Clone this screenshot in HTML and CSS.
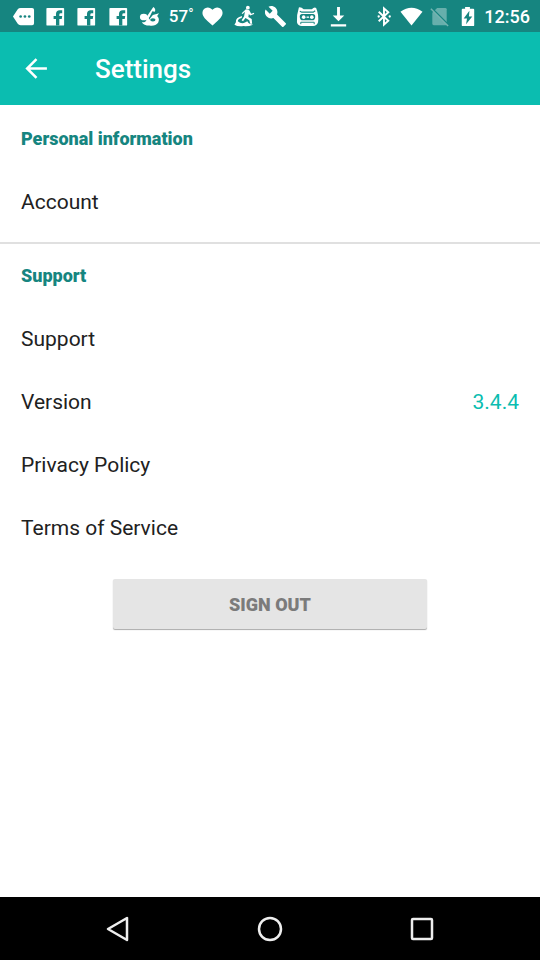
FILE: index.html
```html
<!DOCTYPE html>
<html lang="en">
<head>
<meta charset="utf-8">
<meta name="viewport" content="width=device-width, initial-scale=1">
<title>Settings</title>
<link rel="stylesheet" href="styles.css">
</head>
<body>
<div class="status-bar">
  <div class="notifications">
    <svg class="icon" viewBox="0 0 24 24"><path d="M1 12 6 4.500Q7 3 9 3h12q2 0 2 2v14q0 2-2 2H9q-2 0-3-1.500Z"/><g fill="#168580"><circle cx="9" cy="12" r="1.400"/><circle cx="13.500" cy="12" r="1.400"/><circle cx="18" cy="12" r="1.400"/></g></svg>
    <svg class="icon" viewBox="0 0 24 24"><rect x="2.500" y="3" width="18.500" height="18.500" rx="1"/><path d="M12.500 21.500V14.500H10v-3h2.500V9.500Q12.500 5.500 16.500 5.500H19v3h-1.500q-1.500 0-1.500 1.500v1.500h3l-.5 3H16v7Z" fill="#168580"/></svg>
    <svg class="icon" viewBox="0 0 24 24"><rect x="2.500" y="3" width="18.500" height="18.500" rx="1"/><path d="M12.500 21.500V14.500H10v-3h2.500V9.500Q12.500 5.500 16.500 5.500H19v3h-1.500q-1.500 0-1.500 1.500v1.500h3l-.5 3H16v7Z" fill="#168580"/></svg>
    <svg class="icon" viewBox="0 0 24 24"><rect x="2.500" y="3" width="18.500" height="18.500" rx="1"/><path d="M12.500 21.500V14.500H10v-3h2.500V9.500Q12.500 5.500 16.500 5.500H19v3h-1.500q-1.500 0-1.500 1.500v1.500h3l-.5 3H16v7Z" fill="#168580"/></svg>
    <svg class="icon" viewBox="0 0 24 24"><ellipse cx="6" cy="12.500" rx="4" ry="3.500"/><path d="m7 15 9-13q3 2 1.500 5L15 6.500l-3 6-3 3Z"/><path d="M10 12q2 1 1.500 3.500l4-5 6.500-2-2 3q3 3 1 7-3 4-9 3-6 0-8-3.500 4 .5 5-3Z"/><ellipse cx="15.500" cy="15.500" rx="2.800" ry="1.700" fill="#168580"/></svg>
    <span class="temperature">57<span class="degree">°</span></span>
    <svg class="icon" viewBox="0 0 24 24"><path d="M12 21.500 10.500 20C5 15.200 1.500 12 1.500 8A5.500 5.500 0 0 1 7 2.500c2 0 3.800 1 5 2.500 1.200-1.500 3-2.500 5-2.500A5.500 5.500 0 0 1 22.500 8c0 4-3.500 7.200-9 12Z"/></svg>
    <svg class="icon" viewBox="0 0 24 24"><circle cx="15.500" cy="2.800" r="2"/><path d="m13.500 4.500 3.500 1 2 3.500 3-1v1.500L18 11l-1.500-1.500-.5 3 3.500 2 .5 5h-2l-1-3.500-4-2.500-2.500 3.500-1.500-1 2.500-4 1-5-2.500 2.500-1-1Z"/><path d="M3 18q-.5-5 6.500-6.500l-.5 2q-4 1-4 3.500 4 3.500 8 1l2-1q1 3 6 3.500-5 2-10 1.500-6 1-9.500-1.500Z"/></svg>
    <svg class="icon" viewBox="0 0 24 24"><path d="M22.700 19 13.600 9.900c.9-2.300.4-5-1.500-6.900-2-2-5-2.400-7.400-1.300L9 6 6 9 1.600 4.700C.4 7.100.9 10.100 2.900 12.100c1.900 1.900 4.600 2.400 6.900 1.500l9.100 9.100c.4.400 1 .4 1.400 0l2.300-2.300c.5-.4.500-1.100.1-1.400Z"/></svg>
    <svg class="icon" viewBox="0 0 24 24"><path d="M3 2.500Q5.500 2 8 4.500h8.500Q19 1.500 21 3q3 7 2 15-1.500 4-5 4H6q-4 0-5-4Q.5 10 3 2.500Z"/><path d="M4 6.500 6 7.500h12l2-1.500" fill="none" stroke="#168580" stroke-width="1.200"/><path d="M6 9.500h12q2.500.5 2 3.500t-3 3H7q-2.500 0-3-3t2-3.500Z" fill="#168580"/><circle cx="8" cy="12.700" r="1.900"/><circle cx="16.500" cy="12.700" r="1.900"/><path d="M11 12h2.500v1.400H11Z"/><path d="M5 20v-2h14v2" fill="none" stroke="#168580"/></svg>
    <svg class="icon" viewBox="0 0 24 24"><path d="M10.500 2h3v9H18l-6 6-6-6h4.500ZM4 20h16v2.500H4Z"/></svg>
  </div>
  <div class="system">
    <svg class="icon" viewBox="0 0 24 24"><path d="m7 7 10 9.500-4.500 4v-17l4.500 4L7 17" fill="none" stroke="#fff" stroke-width="2"/><circle cx="7" cy="12" r="1.200"/><circle cx="18.500" cy="12" r="1.200"/></svg>
    <svg class="icon" viewBox="0 0 24 24"><path d="M12 21.500.5 7Q12-1.500 23.500 7Z"/></svg>
    <svg class="icon" viewBox="0 0 24 24"><path d="M9.500 3H18q1.500 0 1.500 1.500V21H6q-1.500 0-1.500-1.500V8Z" opacity=".35"/><path d="m4 3.500 18 18" stroke="#168580" stroke-width="2"/><path d="m3 4 18 18" stroke="#76b5b1" stroke-width="1.500"/></svg>
    <svg class="icon" viewBox="0 0 24 24"><path d="M9.500 2h5v2H18q1 0 1 1v16q0 1-1 1H7q-1 0-1-1V5q0-1 1-1h2.500Z"/><path d="m14 6-6 8h3.500l-1 6L17 12h-3.500Z" fill="#168580"/></svg>
    <time class="clock">12:56</time>
  </div>
</div>
<header class="app-bar">
  <button class="back" type="button" aria-label="Back"><svg viewBox="0 0 24 24"><path d="M22 12H3M12 3l-9 9 9 9" fill="none" stroke="#fff" stroke-width="2.400"/></svg></button>
  <h1>Settings</h1>
</header>
<main>
  <section class="group personal">
    <h2>Personal information</h2>
    <a class="row" href="#account">Account</a>
  </section>
  <section class="group">
    <h2>Support</h2>
    <a class="row" href="#support">Support</a>
    <div class="row"><span>Version</span><span class="value">3.4.4</span></div>
    <a class="row" href="#privacy">Privacy Policy</a>
    <a class="row" href="#terms">Terms of Service</a>
  </section>
  <button class="sign-out" type="button">SIGN OUT</button>
</main>
<nav class="nav-bar">
  <button type="button" aria-label="Back"><svg viewBox="0 0 28 28"><path d="M23 3v22L4 14Z"/></svg></button>
  <button type="button" aria-label="Home"><svg viewBox="0 0 28 28"><circle cx="14" cy="14" r="11"/></svg></button>
  <button type="button" aria-label="Recent apps"><svg viewBox="0 0 28 28"><rect x="4" y="4" width="20" height="20" rx="1"/></svg></button>
</nav>
</body>
</html>
```
FILE: styles.css
```css
* { box-sizing: border-box; }

body {
  margin: 0;
  min-height: 100vh;
  display: flex;
  flex-direction: column;
  background: #fff;
  color: #212121;
  font-family: Roboto, "Liberation Sans", sans-serif;
}

button {
  border: 0;
  padding: 0;
  background: none;
  font-family: inherit;
}

svg { display: block; }

.status-bar {
  display: flex;
  align-items: center;
  gap: 18px;
  height: 32px;
  padding: 0 10px 0 8px;
  background: #168580;
  color: #fff;
}

.notifications {
  flex: 1;
  display: grid;
  grid-template-columns: repeat(11, 1fr);
  align-items: center;
  justify-items: center;
}

.icon {
  width: 23px;
  height: 23px;
  fill: #fff;
}

.temperature {
  display: flex;
  font-size: 17px;
  font-weight: 500;
}

.degree { font-size: 14px; }

.system {
  display: flex;
  align-items: center;
  gap: 5px;
}

.clock {
  font-size: 18px;
  font-weight: 500;
}

.app-bar {
  display: flex;
  align-items: center;
  gap: 46px;
  height: 73px;
  padding: 0 24px;
  background: #0bbdb0;
  color: #fff;
}

.back svg {
  width: 25px;
  height: 25px;
}

h1 {
  margin: 0;
  font-size: 26px;
  font-weight: 500;
}

main {
  flex: 1;
  display: flex;
  flex-direction: column;
}

.group { display: block; }

.personal {
  padding: 2px 0 9px;
  border-bottom: 2px solid #e0e0e0;
}

h2,
.row {
  display: flex;
  align-items: center;
  justify-content: space-between;
  height: 63px;
  margin: 0;
  padding: 0 21px;
}

h2 {
  color: #168580;
  font-size: 18px;
  font-weight: 900;
}

.row {
  color: inherit;
  font-size: 21px;
  text-decoration: none;
}

.value { color: #0bbdb0; }

.sign-out {
  align-self: center;
  width: 58%;
  height: 50px;
  margin: 20px 0;
  border-radius: 2px;
  background: #e5e5e5;
  box-shadow: 0 1px 1px #aaa;
  color: #7b7b7b;
  font-size: 18px;
  font-weight: 900;
}

.nav-bar {
  display: flex;
  align-items: center;
  justify-content: center;
  gap: 124px;
  height: 63px;
  background: #000;
}

.nav-bar svg {
  width: 28px;
  height: 28px;
  fill: none;
  stroke: #eee;
  stroke-width: 2.5;
  stroke-linejoin: round;
}
```
